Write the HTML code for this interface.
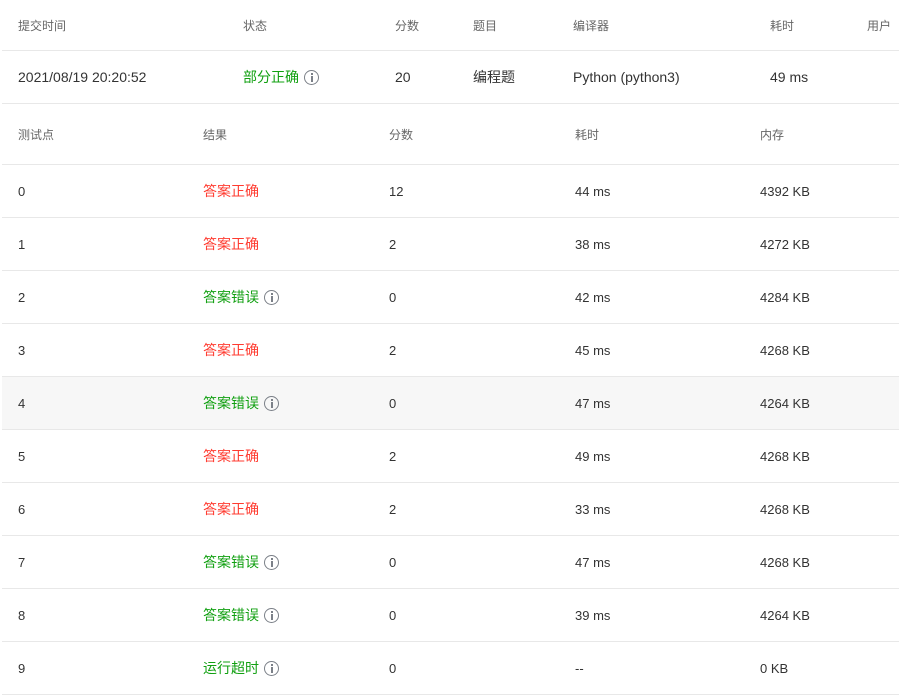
<!DOCTYPE html>
<html><head><meta charset="utf-8"><style>
*{margin:0;padding:0;box-sizing:border-box}
body{width:899px;height:687px;overflow:hidden;background:#fff;font-family:"Liberation Sans","Noto Sans CJK SC",sans-serif;color:#333;position:relative}
.row{position:absolute;left:2px;right:0;border-bottom:1px solid #e8e8e8}
.c{position:absolute;top:0;height:100%;display:flex;align-items:center;white-space:nowrap;font-size:13px}
.t .c{font-size:14px}
.h .c{font-size:12px;color:#666}
.g{color:#11a011;font-size:14px!important}.r{color:#ff3b30;font-size:14px!important}
.i{display:inline-block;width:15px;height:15px;border:1.4px solid #7b8088;border-radius:50%;margin-left:5px;position:relative}
.i:before{content:"";position:absolute;left:5.5px;top:2px;width:2px;height:2px;background:#7b8088}
.i:after{content:"";position:absolute;left:5.5px;top:5px;width:2px;height:6px;background:#7b8088}
.alt{background:#f7f7f7}
</style></head><body>
<div class="row h" style="top:0;height:51px">
<div class="c" style="left:16px">提交时间</div><div class="c" style="left:241px">状态</div><div class="c" style="left:393px">分数</div><div class="c" style="left:471px">题目</div><div class="c" style="left:571px">编译器</div><div class="c" style="left:768px">耗时</div><div class="c" style="left:865px">用户</div></div>
<div class="row t" style="top:51px;height:53px">
<div class="c" style="left:16px">2021/08/19 20:20:52</div><div class="c g" style="left:241px">部分正确<span class="i"></span></div><div class="c" style="left:393px">20</div><div class="c" style="left:471px">编程题</div><div class="c" style="left:571px">Python (python3)</div><div class="c" style="left:768px">49 ms</div></div>
<div class="row h" style="top:104px;height:61px">
<div class="c" style="left:16px">测试点</div><div class="c" style="left:201px">结果</div><div class="c" style="left:387px">分数</div><div class="c" style="left:573px">耗时</div><div class="c" style="left:758px">内存</div></div>

<div class="row" style="top:165px;height:53px"><div class="c" style="left:16px">0</div><div class="c r" style="left:201px">答案正确</div><div class="c" style="left:387px">12</div><div class="c" style="left:573px">44 ms</div><div class="c" style="left:758px">4392 KB</div></div>
<div class="row" style="top:218px;height:53px"><div class="c" style="left:16px">1</div><div class="c r" style="left:201px">答案正确</div><div class="c" style="left:387px">2</div><div class="c" style="left:573px">38 ms</div><div class="c" style="left:758px">4272 KB</div></div>
<div class="row" style="top:271px;height:53px"><div class="c" style="left:16px">2</div><div class="c g" style="left:201px">答案错误<span class="i"></span></div><div class="c" style="left:387px">0</div><div class="c" style="left:573px">42 ms</div><div class="c" style="left:758px">4284 KB</div></div>
<div class="row" style="top:324px;height:53px"><div class="c" style="left:16px">3</div><div class="c r" style="left:201px">答案正确</div><div class="c" style="left:387px">2</div><div class="c" style="left:573px">45 ms</div><div class="c" style="left:758px">4268 KB</div></div>
<div class="row alt" style="top:377px;height:53px"><div class="c" style="left:16px">4</div><div class="c g" style="left:201px">答案错误<span class="i"></span></div><div class="c" style="left:387px">0</div><div class="c" style="left:573px">47 ms</div><div class="c" style="left:758px">4264 KB</div></div>
<div class="row" style="top:430px;height:53px"><div class="c" style="left:16px">5</div><div class="c r" style="left:201px">答案正确</div><div class="c" style="left:387px">2</div><div class="c" style="left:573px">49 ms</div><div class="c" style="left:758px">4268 KB</div></div>
<div class="row" style="top:483px;height:53px"><div class="c" style="left:16px">6</div><div class="c r" style="left:201px">答案正确</div><div class="c" style="left:387px">2</div><div class="c" style="left:573px">33 ms</div><div class="c" style="left:758px">4268 KB</div></div>
<div class="row" style="top:536px;height:53px"><div class="c" style="left:16px">7</div><div class="c g" style="left:201px">答案错误<span class="i"></span></div><div class="c" style="left:387px">0</div><div class="c" style="left:573px">47 ms</div><div class="c" style="left:758px">4268 KB</div></div>
<div class="row" style="top:589px;height:53px"><div class="c" style="left:16px">8</div><div class="c g" style="left:201px">答案错误<span class="i"></span></div><div class="c" style="left:387px">0</div><div class="c" style="left:573px">39 ms</div><div class="c" style="left:758px">4264 KB</div></div>
<div class="row" style="top:642px;height:53px"><div class="c" style="left:16px">9</div><div class="c g" style="left:201px">运行超时<span class="i"></span></div><div class="c" style="left:387px">0</div><div class="c" style="left:573px">--</div><div class="c" style="left:758px">0 KB</div></div>
</body></html>
